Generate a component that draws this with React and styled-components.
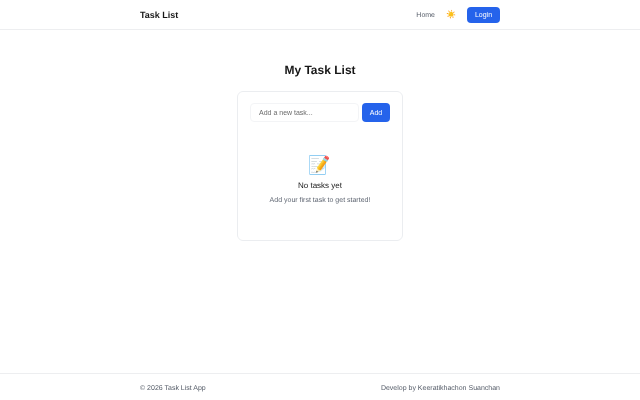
import styled, { createGlobalStyle } from "styled-components"

const Global = createGlobalStyle`
    * { box-sizing: border-box; }
    body {
        margin: 0;
        background: #fff;
        font-family: "Liberation Sans", Arial, sans-serif;
        color: #171717;
        text-rendering: geometricPrecision;
    }
`

const Page = styled.div`
    min-height: 400px;
    display: flex;
    flex-direction: column;
    filter: blur(0.3px);
`

const Header = styled.header`
    height: 30px;
    border-bottom: 1px solid #edeef0;
    display: flex;
    justify-content: center;
`

const Inner = styled.div`
    width: 360px;
    display: flex;
    align-items: center;
    justify-content: space-between;
`

const Brand = styled.div`
    font-size: 9px;
    font-weight: 700;
`

const Nav = styled.nav`
    display: flex;
    align-items: center;
    gap: 11px;
    font-size: 7px;
    line-height: 16px;
    color: #555c68;
`

const NavLink = styled.span`
    padding-top: 3px;
`

const Sun = styled.span`
    font-size: 8px;
`

const Button = styled.button`
    border: 0;
    background: #2563eb;
    color: #fff;
    border-radius: 4px;
    font-family: inherit;
    font-size: 7px;
    padding: 0;
    width: ${({ $w }) => $w}px;
    height: ${({ $h }) => $h}px;
`

const Main = styled.main`
    flex: 1;
    display: flex;
    flex-direction: column;
    align-items: center;
    padding-top: 32px;
`

const Title = styled.h1`
    margin: 0 0 13px;
    font-size: 12px;
    line-height: 16px;
    font-weight: 700;
`

const Card = styled.section`
    width: 166px;
    height: 150px;
    border: 1px solid #ebedf0;
    border-radius: 6px;
    padding: 11px 12px;
`

const Form = styled.form`
    display: flex;
    gap: 3px;
    margin-bottom: 31px;
`

const Input = styled.input`
    flex: 1;
    min-width: 0;
    height: 19px;
    border: 1px solid #f3f4f6;
    border-radius: 4px;
    padding: 0 8px;
    font-family: inherit;
    font-size: 7px;
    outline: none;

    &::placeholder {
        color: #6b6b6b;
    }
`

const Empty = styled.div`
    display: flex;
    flex-direction: column;
    align-items: center;
`

const Emoji = styled.div`
    font-size: 18px;
    line-height: 24px;
    margin-bottom: 3px;
`

const EmptyTitle = styled.div`
    font-size: 8px;
    line-height: 12px;
    margin-bottom: 3px;
`

const EmptyText = styled.div`
    font-size: 7px;
    line-height: 12px;
    color: #5f6672;
`

const Footer = styled.footer`
    height: 27px;
    padding-top: 3px;
    border-top: 1px solid #edeef0;
    display: flex;
    justify-content: center;
    font-size: 7px;
    line-height: 10px;
    color: #555c68;
`

export default function App() {
    return (
        <Page>
            <Global />
            <Header>
                <Inner>
                    <Brand>Task List</Brand>
                    <Nav>
                        <NavLink>Home</NavLink>
                        <Sun>☀️</Sun>
                        <Button $w={33} $h={16}>Login</Button>
                    </Nav>
                </Inner>
            </Header>
            <Main>
                <Title>My Task List</Title>
                <Card>
                    <Form>
                        <Input placeholder="Add a new task..." />
                        <Button type="button" $w={28} $h={19}>Add</Button>
                    </Form>
                    <Empty>
                        <Emoji>📝</Emoji>
                        <EmptyTitle>No tasks yet</EmptyTitle>
                        <EmptyText>Add your first task to get started!</EmptyText>
                    </Empty>
                </Card>
            </Main>
            <Footer>
                <Inner>
                    <span>© 2026 Task List App</span>
                    <span>Develop by Keeratikhachon Suanchan</span>
                </Inner>
            </Footer>
        </Page>
    )
}
